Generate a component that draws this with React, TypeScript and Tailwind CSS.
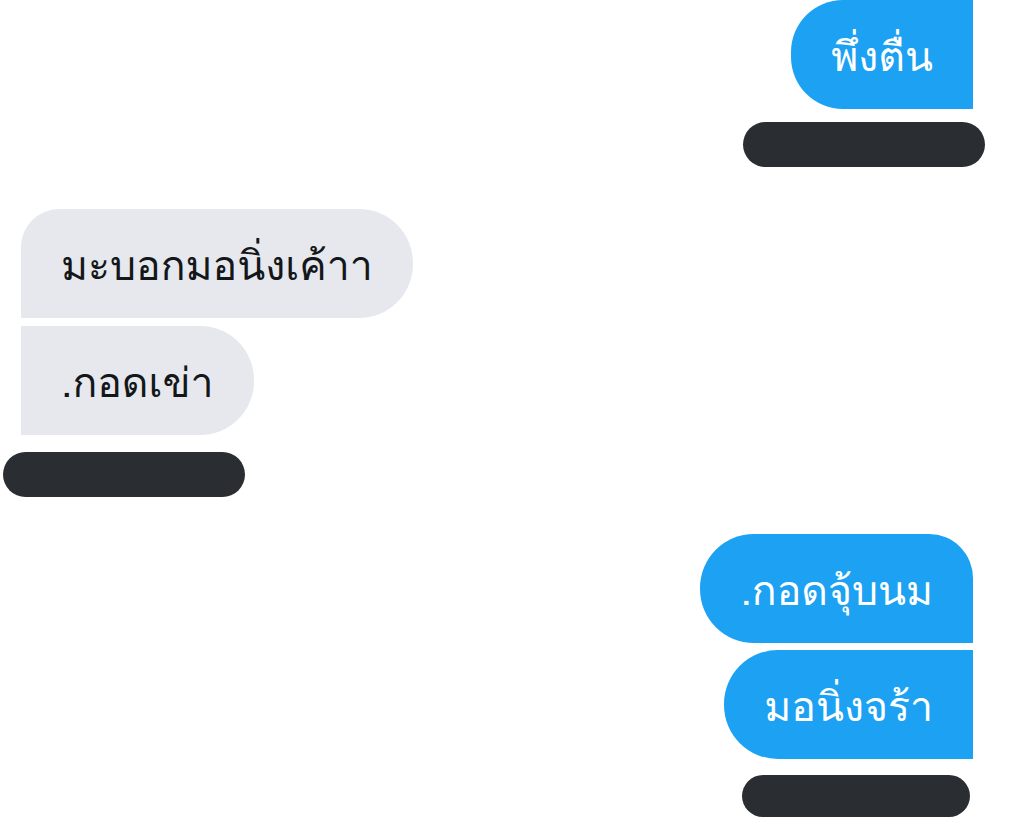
const font = {
  fontFamily: '"Loma", "Garuda", "Noto Sans Thai", "Noto Sans", "DejaVu Sans", sans-serif',
};

function Bar({ w }: { w: string }) {
  return <div className={`h-[45px] rounded-full bg-[#2a2d32] ${w}`}></div>;
}

export default function App() {
  return (
    <div className="w-[1024px] h-[824px] bg-white overflow-hidden" style={font}>
      <div className="flex flex-col items-end pr-[51px]">
        <div className="h-[109px] flex items-center pt-1 px-10 bg-[#1da1f2] text-white text-[41px] rounded-l-[52px]">
          พึ่งตื่น
        </div>
      </div>
      <div className="flex justify-end pr-[39px] mt-[13px]">
        <Bar w="w-[242px]" />
      </div>

      <div className="flex flex-col items-start pl-[21px] mt-[42px] gap-2">
        <div className="h-[109px] flex items-center pt-1 px-10 bg-[#e6e8ed] text-[#14171a] text-[41px] rounded-tl-[38px] rounded-r-[54px]">
          มะบอกมอนิ่งเค้าา
        </div>
        <div className="h-[109px] flex items-center pt-1 px-10 bg-[#e6e8ed] text-[#14171a] text-[41px] rounded-r-[54px]">
          .กอดเข่า
        </div>
      </div>
      <div className="flex pl-[3px] mt-[17px]">
        <Bar w="w-[242px]" />
      </div>

      <div className="flex flex-col items-end pr-[51px] mt-[37px] gap-[7px]">
        <div className="h-[109px] flex items-center pt-1 px-10 bg-[#1da1f2] text-white text-[41px] rounded-l-[54px] rounded-tr-[44px]">
          .กอดจุ้บนม
        </div>
        <div className="h-[109px] flex items-center pt-1 px-10 bg-[#1da1f2] text-white text-[41px] rounded-l-[54px]">
          มอนิ่งจร้า
        </div>
      </div>
      <div className="flex justify-end pr-[54px] mt-4">
        <div className="h-[42px] w-[228px] rounded-full bg-[#2a2d32]"></div>
      </div>
    </div>
  );
}
